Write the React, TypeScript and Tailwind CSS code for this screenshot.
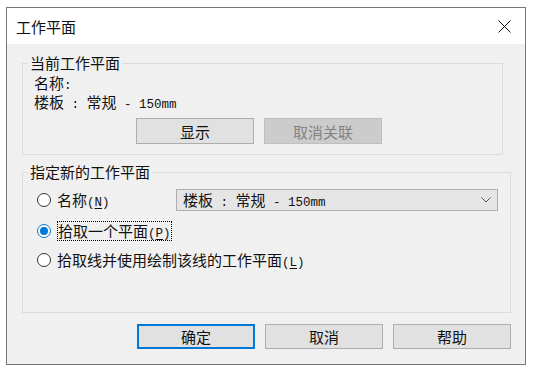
import type { ReactNode } from 'react'

const cjk = "font-['Noto_Sans_CJK_SC',sans-serif]"

// half-width latin run, sized so each char is half a CJK cell
function M({ children, u }: { children: ReactNode; u?: boolean }) {
  return (
    <span
      className={`font-['Liberation_Mono',monospace] text-[12.5px] leading-none ${u ? 'underline underline-offset-2' : ''}`}
    >
      {children}
    </span>
  )
}

function Radio({ checked }: { checked?: boolean }) {
  return (
    <svg width="14" height="14" viewBox="0 0 14 14" className="shrink-0">
      <circle
        cx="7"
        cy="7"
        r="6.5"
        fill="#fff"
        stroke={checked ? '#0078d7' : '#333'}
        strokeWidth="1"
      />
      {checked && <circle cx="7" cy="7" r="4" fill="#0078d7" />}
    </svg>
  )
}

function Btn({
  children,
  isDefault,
  disabled,
}: {
  children: ReactNode
  isDefault?: boolean
  disabled?: boolean
}) {
  let cls = 'bg-[#e1e1e1] border border-[#adadad] text-[#111]'
  if (isDefault) cls = 'bg-[#e1e1e1] border-2 border-[#0078d7] text-[#111]'
  if (disabled) cls = 'bg-[#cccccc] border border-[#bfbfbf] text-[#838383]'
  return (
    <button
      type="button"
      className={`w-[118px] flex items-center justify-center text-[15px] leading-none ${cls}`}
    >
      {children}
    </button>
  )
}

export default function App() {
  return (
    <div className={`w-[537px] h-[372px] bg-white pt-[7px] pl-[6px] text-[#111] ${cjk}`}>
      <div className="w-[520px] border border-[#767676] bg-[#f0f0f0] flex flex-col">
        {/* title bar */}
        <div className="h-[36px] bg-white flex items-center justify-between pl-[9px] pr-[14px]">
          <span className="text-[15px] leading-none">工作平面</span>
          <svg width="13" height="13" viewBox="0 0 13 13">
            <path d="M0.5 0.5 L12.5 12.5 M12.5 0.5 L0.5 12.5" stroke="#111" strokeWidth="1" />
          </svg>
        </div>

        {/* current work plane */}
        <fieldset className="mt-[10px] ml-[15px] w-[481px] border border-[#dcdcdc]">
          <legend className="ml-[5px] px-[2px] text-[15px] leading-[18px]">当前工作平面</legend>
          <div className="pl-[11px] pt-[2px] pb-[10px]">
            <div className="text-[15px] leading-[18px]">
              名称<M>:</M>
            </div>
            <div className="text-[15px] leading-[18px]">
              楼板<M> : </M>常规<M> - 150mm</M>
            </div>
            <div className="flex gap-[10px] ml-[102px] mt-[7px] h-[26px]">
              <Btn>显示</Btn>
              <Btn disabled>取消关联</Btn>
            </div>
          </div>
        </fieldset>

        {/* new work plane */}
        <fieldset className="mt-[8px] ml-[15px] w-[489px] border border-[#dcdcdc]">
          <legend className="ml-[5px] px-[2px] text-[15px] leading-[18px]">指定新的工作平面</legend>
          <div className="pl-[14px] pr-[12px] pb-[42px]">
            <div className="mt-[8px] h-[22px] flex items-center">
              <div className="w-[139px] flex items-center gap-[6px]">
                <Radio />
                <span className="text-[15px] leading-[18px]">
                  名称<M>(</M>
                  <M u>N</M>
                  <M>)</M>
                </span>
              </div>
              <div className="flex-1 h-[22px] bg-[#e5e5e5] border border-[#adadad] flex items-center justify-between pl-[6px] pr-[6px]">
                <span className="text-[15px] leading-[18px]">
                  楼板<M> : </M>常规<M> - 150mm</M>
                </span>
                <svg width="10" height="6" viewBox="0 0 10 6">
                  <path d="M0.5 0.5 L5 5 L9.5 0.5" fill="none" stroke="#555" strokeWidth="1" />
                </svg>
              </div>
            </div>

            <div className="mt-[10px] h-[20px] flex items-center gap-[6px]">
              <Radio checked />
              <span className="text-[15px] leading-[18px] border border-dotted border-black">
                拾取一个平面<M>(</M>
                <M u>P</M>
                <M>)</M>
              </span>
            </div>

            <div className="mt-[9px] h-[20px] flex items-center gap-[6px]">
              <Radio />
              <span className="text-[15px] leading-[18px]">
                拾取线并使用绘制该线的工作平面<M>(</M>
                <M u>L</M>
                <M>)</M>
              </span>
            </div>
          </div>
        </fieldset>

        {/* footer buttons */}
        <div className="mt-[11px] mb-[15px] pr-[14px] flex justify-end gap-[10px] h-[25px]">
          <Btn isDefault>确定</Btn>
          <Btn>取消</Btn>
          <Btn>帮助</Btn>
        </div>
      </div>
    </div>
  )
}
